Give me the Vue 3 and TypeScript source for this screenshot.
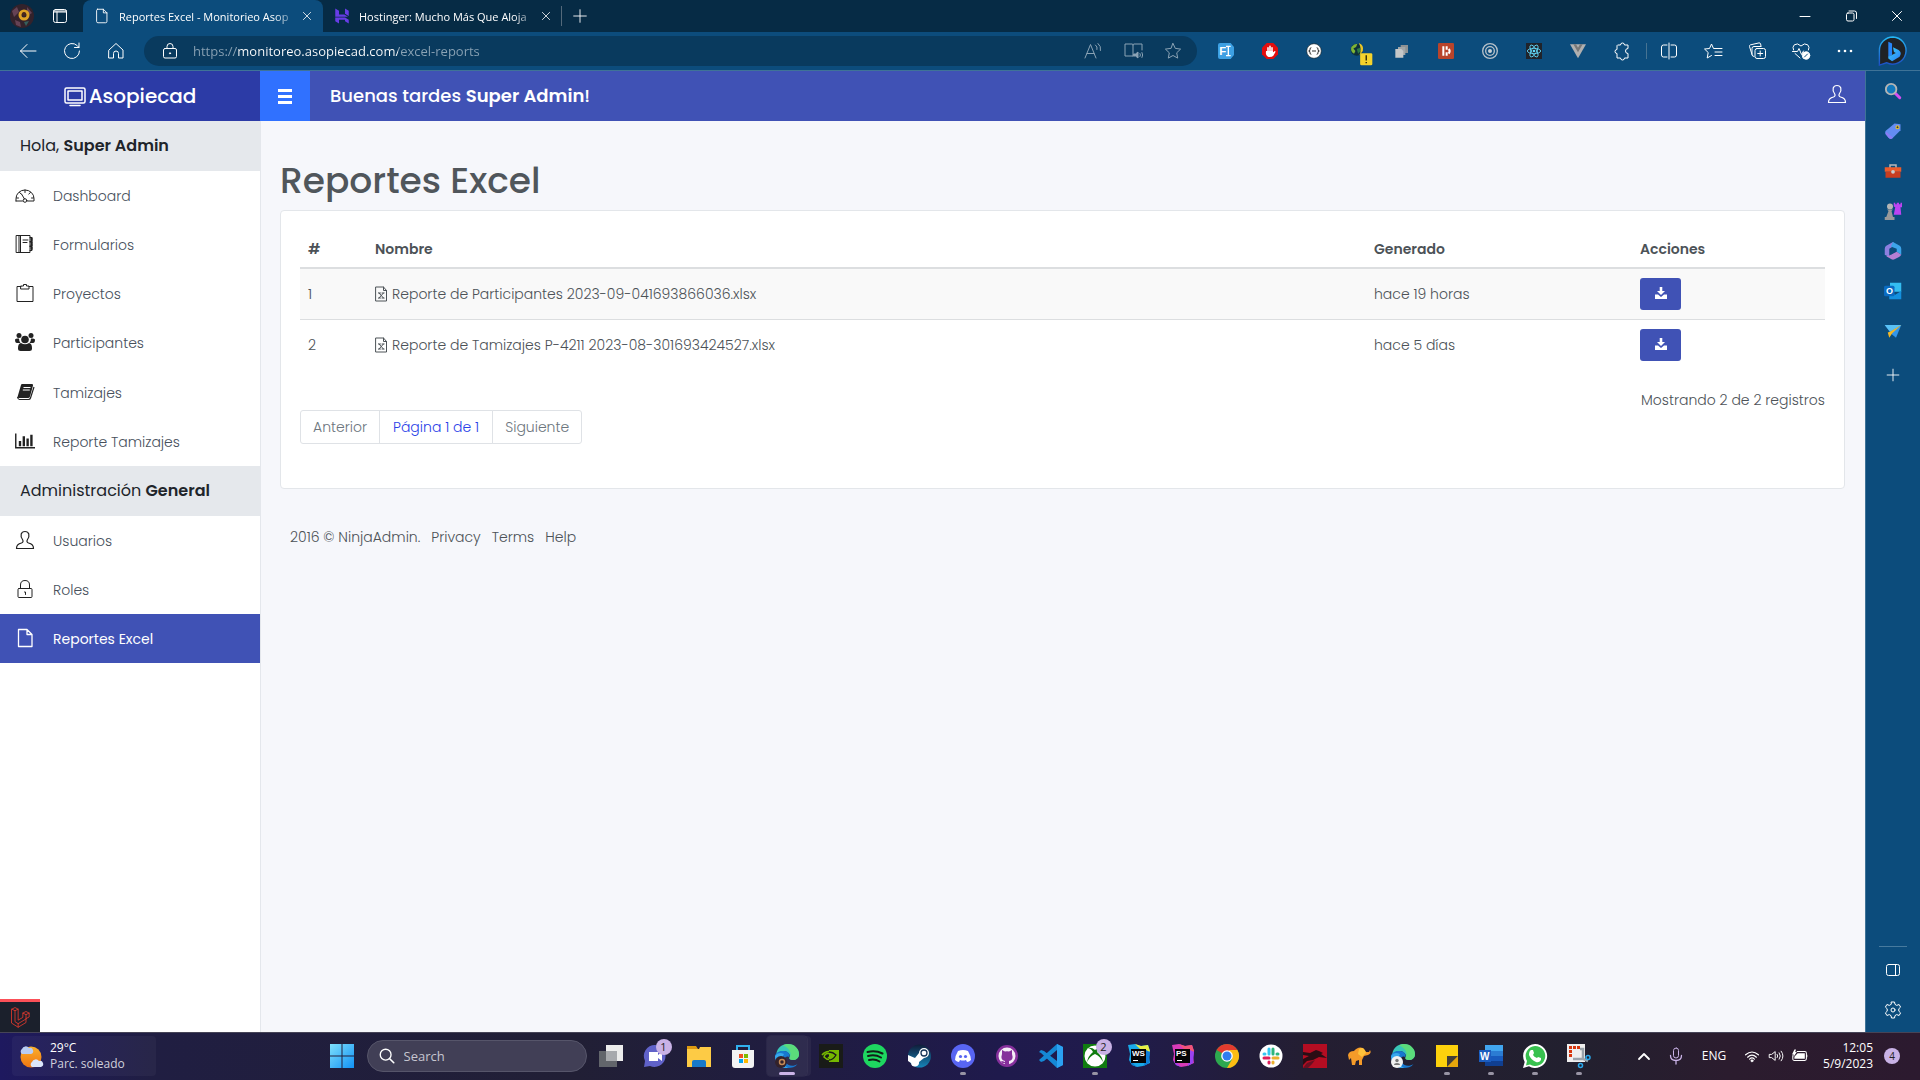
<script setup lang="ts">
import { ref } from 'vue'

interface Icon { box?: string; body: string }
interface NamedIcon { id: string; label: string; icon: Icon }
interface TaskApp extends NamedIcon { state?: 'active' | 'running'; badge?: string }
interface MenuItem { label: string; icon: Icon; active?: boolean }
interface Report { id: number; name: string; created: string }

const line = (body: string, box = '0 0 20 20'): Icon => ({
  box,
  body: `<g fill="none" stroke="currentColor" stroke-linecap="round" stroke-linejoin="round">${body}</g>`,
})
const solid = (body: string, box = '0 0 24 24'): Icon => ({ box, body })

const chrome = {
  workspaces: line('<rect x="3.5" y="3.5" width="13" height="13" rx="2"/><path d="M3.5 5h13M3.5 6h13M7 6v10"/>'),
  page: line('<path d="M5 2.5h6.500l4 4V16a1.500 1.500 0 0 1-1.500 1.500H5.500A1.500 1.500 0 0 1 4 16V4a1.500 1.500 0 0 1 1-1.500zM11.500 2.500v4h4"/>'),
  close: line('<path d="M5.500 5.500l9 9M14.500 5.500l-9 9"/>'),
  plus: line('<path d="M10 3v14M3 10h14"/>'),
  back: line('<path d="M18 10H2.500M9 3.500L2.500 10 9 16.500"/>'),
  refresh: line('<path d="M17.500 10a7.500 7.500 0 1 1-2.300-5.400L17 6.500M17 2v4.500h-4.500"/>'),
  home: line('<path d="M3 9l7-6.500L17 9v8h-4.500v-4.500a2.500 2.500 0 0 0-5 0V17H3z"/>'),
  lock: line('<rect x="3.500" y="7.500" width="13" height="9.500" rx="1.500"/><path d="M7 7.500V5.500a3 3 0 0 1 6 0v2"/><circle cx="10" cy="12.300" r=".6" fill="currentColor"/>'),
  aloud: line('<path d="M2 17L7.500 3.500 13 17M4 12.500h7M12.500 4a4 4 0 0 1 1.500 4.500M15 2.500a7 7 0 0 1 2.500 7"/>'),
  book: line('<path d="M10 15H2V3h7q1 0 1 1V15M10 4q0-1 1-1h8v6"/><path d="M11 13h1.500l2.500-2v6l-2.500-2H11z" fill="currentColor"/><path d="M17 12.500q1 1.500 0 3M19 11.500q1.500 2.500 0 5"/>'),
  star: line('<path d="M10 2.500l2.300 4.900 5.300.7-3.900 3.700 1 5.300-4.700-2.600-4.700 2.600 1-5.300L2.400 8.100l5.300-.7z"/>'),
  puzzle: line('<path d="M6 4h2.500a2 2 0 0 1 4 0H16v3.500a2.500 2.500 0 0 0 0 5V17h-3.500a2 2 0 0 1-4 0H5v-4.500a2 2 0 1 1 0-4V5z"/>'),
  split: line('<path d="M8 4H4.500A2 2 0 0 0 2.500 6v8a2 2 0 0 0 2 2H8M12 4h3.500a2 2 0 0 1 2 2v8a2 2 0 0 1-2 2H12M10 2v16"/>'),
  favorites: line('<path d="M13 7.500h-2.500L8.500 3 6.500 7.500 1.500 8l3.700 3.500-1 5.500 4.300-2.500M13 7.500h6M12 11h7M12 14.500h7"/>'),
  collections: line('<path d="M5 13.500L2.500 5.500q-.3-1.200.8-1.600l8.700-2q1.200-.2 1.600 1L14 5"/><path d="M7 15.500q-2 0-2-2V7.500q0-2 2-2h7"/><rect x="8" y="7.500" width="10.500" height="10" rx="2"/><path d="M13.200 10v5M10.700 12.500h5"/>'),
  health: line('<path d="M2.500 9Q1 6 3.300 3.800 6.500 1.500 10 5q3.500-3.500 6.700-1.200Q19 6 17.500 9M1.500 10.500h5l1.500-3 2.500 6 2-3.500M4 12.500l5 4.500"/><circle cx="15" cy="14.500" r="3.700" fill="currentColor"/><path d="M13.500 16l3-3" stroke="#0c4c7c"/>'),
  dots: solid('<g fill="currentColor"><circle cx="4" cy="10" r="1.300"/><circle cx="10" cy="10" r="1.300"/><circle cx="16" cy="10" r="1.300"/></g>', '0 0 20 20'),
  minimize: line('<path d="M5 10.500h10"/>'),
  restore: line('<rect x="5.500" y="7" width="7.500" height="8" rx="1.500"/><path d="M8 5h5.500a2 2 0 0 1 2 2v5.500"/>'),
  panel: line('<rect x="3.500" y="4.500" width="13" height="11" rx="2"/><path d="M12.500 4.500v11"/>'),
  gear: line('<circle cx="10" cy="10" r="2"/><path d="M8.500 2h3l.5 2.400 1.700 1 2.400-.9 1.500 2.600-1.800 1.700v2.400l1.800 1.700-1.500 2.600-2.400-.9-1.700 1-.5 2.400h-3L8 15.600l-1.700-1-2.400.9-1.500-2.600 1.800-1.700V8.800L2.400 7.100l1.500-2.600 2.400.9 1.700-1z"/>'),
}

const hostinger = solid('<path fill="#673de6" d="M3 2l5 3v5h7l5 3H3zM16 2l5 3v7l-5-3zM3 14h13l5 3v5l-5-3v-2H8v5l-5-3z"/>')
const avatar = solid('<circle cx="12" cy="12" r="12" fill="#33222b"/><path d="M2 7l5-4 2 5-5 5zM17 3l5 6-5 3zM5 16l5 2 1 5-5-2z" fill="#654254"/><path d="M14 18l5-1-3 5z" fill="#35605d"/><circle cx="14" cy="11" r="4" fill="none" stroke="#dfa225" stroke-width="3"/><circle cx="14" cy="10" r="2" fill="#4b271c"/>')

const extensions: NamedIcon[] = [
  { id: 'font', label: 'Fonts', icon: solid('<path fill="#3da0e3" d="M3 0h16l5 6v12l-5 6H3q-3 0-3-3V3q0-3 3-3z"/><text x="2" y="18" font-family="Liberation Sans" font-weight="700" font-size="17" fill="#fff">F</text><path d="M12 5h7M12 19h7M15.500 5v14" stroke="#fff" stroke-width="2"/>') },
  { id: 'block', label: 'Bloqueador', icon: solid('<path fill="#e40d0d" d="M7 0h10l7 7v10l-7 7H7l-7-7V7z"/><path d="M9 13V7M12 13V5M15 13V7M7 13v3" stroke="#fff" stroke-width="2.300" stroke-linecap="round"/><path fill="#fff" d="M6 12h10l1 2 2-2q2 0 1 2l-3 5q-2 2-5 2-5 0-6-5z"/>') },
  { id: 'json', label: 'JSON', icon: solid('<circle cx="12" cy="12" r="11" fill="#fff" stroke="#18242b"/><path d="M8 7q-2 0-2 2v2l-2 1 2 1v2q0 2 2 2M16 7q2 0 2 2v2l2 1-2 1v2q0 2-2 2M9 12h6" fill="none" stroke="#333" stroke-width="1.500"/>') },
  { id: 'idm', label: 'Descargas', icon: solid('<circle cx="10" cy="10" r="9" fill="#0d2f3a"/><path d="M2 6q4-5 9-5l-2 5-4 2 3 4-2 4Q0 13 2 6z" fill="#7db436"/><path d="M10 9l5-2 1 5-4 4z" fill="#2c7a44"/><path d="M13 0q8 3 6 12l-5 6q4-9-1-18z" fill="#e9c527"/><rect x="15" y="15" width="18" height="18" rx="2" fill="#f5d32c"/><path d="M24 18v8M24 28v2" stroke="#25220c" stroke-width="2"/>', '0 0 34 34') },
  { id: 'copy', label: 'Copias', icon: solid('<path d="M10 3h11v12H10z" fill="#8e9294"/><path fill="#a2a6a8" d="M6 6h11v12H6z"/><path fill="#c5c7c8" d="M2 9h9l3 3v10H2z"/>') },
  { id: 'bitbar', label: 'Extensión', icon: solid('<rect width="24" height="24" rx="2" fill="#b9442b"/><path d="M8 5v14M13 5v5M13 14v5M16 9q3 3 0 7" stroke="#fff" stroke-width="3" fill="none"/>') },
  { id: 'target', label: 'Objetivo', icon: solid('<g fill="none" stroke="#b8c2ca" stroke-width="2"><circle cx="12" cy="12" r="11"/><circle cx="12" cy="12" r="6.500"/></g><circle cx="12" cy="12" r="3" fill="#c8d0d6"/>') },
  { id: 'react', label: 'React', icon: solid('<path fill="#20232a" d="M0 0h24v24H0z"/><g fill="none" stroke="#61dafb" stroke-width="1.300"><ellipse cx="12" cy="12" rx="10" ry="4"/><ellipse cx="12" cy="12" rx="10" ry="4" transform="rotate(60 12 12)"/><ellipse cx="12" cy="12" rx="10" ry="4" transform="rotate(120 12 12)"/></g><circle cx="12" cy="12" r="2" fill="#61dafb"/>') },
  { id: 'vue', label: 'Vue', icon: solid('<path fill="#b0b0b0" d="M0 2h24L12 23z"/><path fill="#777" d="M5 2h4l3 5 3-5h4l-7 12z"/>') },
  { id: 'puzzle', label: 'Extensiones', icon: chrome.puzzle },
]
const toolbarActions: NamedIcon[] = [
  { id: 'split', label: 'Pantalla dividida', icon: chrome.split },
  { id: 'favorites', label: 'Favoritos', icon: chrome.favorites },
  { id: 'collections', label: 'Colecciones', icon: chrome.collections },
  { id: 'health', label: 'Rendimiento', icon: chrome.health },
  { id: 'more', label: 'Más', icon: chrome.dots },
]
const navActions: NamedIcon[] = [
  { id: 'back', label: 'Atrás', icon: chrome.back },
  { id: 'refresh', label: 'Actualizar', icon: chrome.refresh },
  { id: 'home', label: 'Inicio', icon: chrome.home },
]
const bing = solid('<defs><linearGradient id="bg1" x2="0" y2="1"><stop stop-color="#25b8f5"/><stop offset="1" stop-color="#1d4fc4"/></linearGradient><linearGradient id="bg2" x2="1" y2="1"><stop stop-color="#39d2f0"/><stop offset="1" stop-color="#2b7cff"/></linearGradient></defs><path d="M16 1a14.500 14.500 0 1 1-7 27.500L1.500 31V16A14.500 14.500 0 0 1 16 1z" fill="#1f2226" stroke="url(#bg1)" stroke-width="1.500"/><path d="M11 6l4 2v12l-4 3z" fill="#2785f8"/><path d="M16 12l6 3q4 3 1 7l-8 5-4-3v-2l8-4-2-1z" fill="url(#bg2)"/>', '0 0 32 32')

const edgeApps: NamedIcon[] = [
  { id: 'search', label: 'Buscar', icon: solid('<path d="M15 15l6 6" stroke="#d44df2" stroke-width="4" stroke-linecap="round"/><circle cx="9.500" cy="9.500" r="7" fill="#1379bd" stroke="#b5b5b5" stroke-width="2.500"/>') },
  { id: 'shop', label: 'Compras', icon: solid('<path d="M14 2l8 1v8L11 22q-2 1-4 0l-5-6q-1-2 0-4z" fill="#648cf2"/><path d="M3 13l9 8q-3 3-6 0l-4-5z" fill="#8a7cf5"/><circle cx="18" cy="7" r="2" fill="#333" stroke="#e9c32a" stroke-width="1.500"/>') },
  { id: 'tools', label: 'Herramientas', icon: solid('<path d="M8 8V4h8v4" fill="none" stroke="#b8b8b8" stroke-width="2"/><path d="M1 7h22v6H1z" fill="#ee5b2b"/><path d="M2 13h20v8H2z" fill="#c93d20"/><circle cx="12" cy="13" r="2.500" fill="#ccc"/>') },
  { id: 'games', label: 'Juegos', icon: solid('<path d="M13 1h2v2h2V1h3v2h2V1h2v6h-2l1 10H13l2-10-2-1z" fill="#bc43f2"/><circle cx="8" cy="6" r="4" fill="#b5b5b5"/><path d="M4 10h8l-2 2 2 8h2v4H1v-4h2l3-8z" fill="#999"/>') },
  { id: 'm365', label: 'Microsoft 365', icon: solid('<path d="M12 0L3 5q-2 1-2 4v8l6 3V9l8-5z" fill="#8c7fe0"/><path d="M12 0l9 5q2 1 2 4v8l-6-4V9L9 6z" fill="#3ca4ea"/><path d="M7 18l10-5 6 4q-1 2-3 3l-6 3q-2 1-4 0l-7-4z" fill="#b57fd4"/><path d="M9 9l7 3-7 5z" fill="#0c4c7c"/>') },
  { id: 'outlook', label: 'Outlook', icon: solid('<path d="M8 1h15v12H8z" fill="#34bdf1"/><path d="M7 13l8 4 8-5v11H7z" fill="#1490df"/><rect y="5" width="14" height="14" rx="2" fill="#0a6bc2"/><text x="2.500" y="16.500" font-family="Liberation Sans" font-weight="700" font-size="12" fill="#fff">O</text>') },
  { id: 'drop', label: 'Drop', icon: solid('<path d="M1 4l22 0-7 17-6-5z" fill="#3396eb"/><path d="M1 4h22L8 13z" fill="#59c1f5"/><path d="M8 13L23 4 11 15l-4 6-2-7z" fill="#f4b826"/>') },
  { id: 'add', label: 'Agregar', icon: line('<path d="M10 3.500v13M3.500 10h13"/>') },
]

const menuIcons = {
  dashboard: line('<path d="M1 16v-2.500a9 8.500 0 0 1 18 0V16h-6.500M7.500 16H1M10 5v2.500M4.500 7.500l1.700 1.500M15.500 7.500l-1.700 1.500M1.500 13h2M16.500 13h2M6.500 9l3 5"/><circle cx="10" cy="15.500" r="1.800"/>'),
  forms: line('<path d="M1.500 1.500H15v17H1.500zM4 1.500v17M5.500 1.500v17M8 6h5M8 8.500h4M15 3.500h2v4h-2M15 8h2v4h-2M15 12.500h2v4h-2"/><path d="M16.500 4v12" stroke-width="2" stroke-dasharray="2 1"/>'),
  clipboard: line('<path d="M6 3.500H2v15h16v-15h-4M6 6h8V3h-2.500V1.500h-3V3H6z"/>'),
  people: solid('<g fill="currentColor"><circle cx="4" cy="3.500" r="2.500"/><circle cx="16" cy="3.500" r="2.500"/><path d="M0 7.500q1-1.500 4-1 0 3 1.500 4.500H2Q0 11 0 7.500zM20 7.500q-1-1.500-4-1 0 3-1.500 4.500H18q2 0 2-3.500z"/><circle cx="10" cy="7.500" r="3.800"/><path d="M6 11q4 2.500 8 0 3 .5 3 5v1q0 2-2.500 2h-9Q3 19 3 17v-1q0-4.500 3-5z"/></g>', '0 0 20 20'),
  book: solid('<path d="M7 2h10q1.500 0 1 1.500L15 14.500q-.4 1.500-2 1.500H4q-1.500 0-1.500-1L6 3q.3-1 1-1z" fill="currentColor"/><path d="M8.500 5.500h7M7.800 8h7" stroke="#fff"/><path d="M2.500 15q.5 2.500 2 2.500h9q1.500 0 2-1.500l3.500-11" stroke="currentColor" fill="none" stroke-width="1.200"/>', '0 0 20 20'),
  chart: solid('<path d="M.8 2v15H21" fill="none" stroke="currentColor" stroke-width="1.500"/><path d="M4 10h2.500v5.500H4zM8 5h2.500v10.500H8zM12 7.500h2.500v8H12zM16 3.500h2.500v12H16z" fill="currentColor"/>', '0 0 21 20'),
  user: line('<path d="M7.500 9.500Q5.500 7 6.200 4 7 1.500 10 1.500T13.800 4q.7 3-1.300 5.500-1.500 2.500 1 3.500 5 1 5 5.500H1.500q0-4.500 5-5.500 2.500-1 1-3.500z" stroke-width="1.200"/>'),
  lock: line('<rect x="3" y="9.500" width="14" height="9" rx="1"/><path d="M5.500 9.500V6q0-4.500 4.500-4.500T14.500 6v3.500M9.500 13h1v2.500"/>'),
  file: line('<path d="M3.500 1.500h8.500l5 5v12h-13.500zM12 1.500v5h5" stroke-width="1.300"/>'),
  monitor: line('<rect x="1" y="2" width="20" height="15" rx="1.500" stroke-width="1.500"/><rect x="4" y="5" width="14" height="9" stroke-width="1.500"/><path d="M6 19.500h10" stroke-width="1.500"/>', '0 0 22 21'),
  burger: solid('<path d="M1 2.500h14M1 8.500h14M1 14.500h14" stroke="currentColor" stroke-width="3"/>', '0 0 16 16'),
  excel: line('<path d="M1 1h7.500l3 3.500V15H1zM8.500 1v3.500h3M3.500 7h2M7 7h2M4 7l4.500 5M8.500 7L4 12M3.500 12h2M7 12h2"/>', '0 0 13 16'),
  download: solid('<path d="M4.700 0h2.600v4H10L6 8 2 4h2.700z" fill="currentColor"/><path d="M0 7.500h3L6 10l3-2.500h3V12H0z" fill="currentColor"/>', '0 0 12 12'),
}

const mainMenu: MenuItem[] = [
  { label: 'Dashboard', icon: menuIcons.dashboard },
  { label: 'Formularios', icon: menuIcons.forms },
  { label: 'Proyectos', icon: menuIcons.clipboard },
  { label: 'Participantes', icon: menuIcons.people },
  { label: 'Tamizajes', icon: menuIcons.book },
  { label: 'Reporte Tamizajes', icon: menuIcons.chart },
]
const adminMenu: MenuItem[] = [
  { label: 'Usuarios', icon: menuIcons.user },
  { label: 'Roles', icon: menuIcons.lock },
  { label: 'Reportes Excel', icon: menuIcons.file, active: true },
]
const reports: Report[] = [
  { id: 1, name: 'Reporte de Participantes 2023-09-041693866036.xlsx', created: 'hace 19 horas' },
  { id: 2, name: 'Reporte de Tamizajes P-4211 2023-08-301693424527.xlsx', created: 'hace 5 días' },
]

const laravel = line('<path d="M2 4l4-2 4 2v14l6-3.500V9l4-2 4 2v5l-4 2v5l-10 6-8-5zM2 4l4 2 4-2M6 6v14l4 2.500 10-6M10 22.500V27M16 9l4 2 4-2M20 11v5" stroke="#ef3b2d"/>', '0 0 26 28')
const weatherIcon = solid('<defs><linearGradient id="sun" x2="0" y2="1"><stop stop-color="#fbb02b"/><stop offset="1" stop-color="#ef7512"/></linearGradient></defs><circle cx="12" cy="13" r="10.500" fill="url(#sun)"/><path d="M3 10a3 3 0 0 1 0-5 4 4 0 0 1 7-1 3 3 0 0 1 2 6z" fill="#b9cdf3"/><path d="M13 23a3 3 0 0 1 0-5 4 4 0 0 1 7-1 3 3 0 0 1 2 6z" fill="#dbe6fb"/>')
const startIcon = solid('<defs><linearGradient id="win" x2="1" y2="1"><stop stop-color="#7fe0fb"/><stop offset="1" stop-color="#1191f5"/></linearGradient></defs><path fill="url(#win)" d="M0 0h11.500v11.500H0zM12.500 0H24v11.500H12.500zM0 12.500h11.500V24H0zM12.500 12.500H24V24H12.500z"/>')
const searchIcon = line('<circle cx="8.500" cy="8.500" r="6" stroke-width="1.500"/><path d="M13 13l4.500 4.500" stroke-width="1.800"/>')

const edgeBody = '<path d="M1 13C1 5 6 0 12.500 0 19 0 24 5 24 10c0 4-3 6-6 6-3 0-4-1-3.500-2.500C16 11 13 7 9 7c-4 0-7 2-8 6z" fill="#39c6b8"/><path d="M13 0c7 0 11 5 11 10 0 4-3 6-6 6-3 0-4-1-3.500-2.500C17 10 15 4 8 1.500 9.500.5 11 0 13 0z" fill="#5bdc7b"/><path d="M0 12C1 8 5 6.500 9 7c4 0 6 3 5.500 6-4-2-6 2-4 5 2 4 8 5 12 2-2 3-6 4-10 4C5 24 0 18.500 0 12z" fill="#1878cf"/><path d="M9 10c-3 4-1 11 4 13.900C5 25 0 19 0 12q3-5 9-2z" fill="#37a8ec"/>'
const jet = (a: string, b: string, c: string, t: string) =>
  `<path d="M1 1l7-1 6 2 7-1 2 6-1 6 1 6-7 3-6 1-5-2-3-5 1-6z" fill="${a}"/><path d="M8 0l6 2 7-1 2 6-4 4z" fill="${b}"/><path d="M2 16l8 7-5-2zM19 6l4 2-1 11-5 3z" fill="${c}"/><path d="M4 5h15v14H4z" fill="#050505"/><text x="5" y="12" font-family="Liberation Sans" font-weight="700" font-size="8" fill="#fff">${t}</text><path d="M6 16.500h5" stroke="#fff"/>`

const taskApps: TaskApp[] = [
  { id: 'tasks', label: 'Vista de tareas', icon: solid('<path d="M7 1h17v16H7z" fill="#ececec"/><path d="M0 7h18v16H0z" fill="#62656b"/><path d="M7 7h11v10H7z" fill="#a7a9ad"/>') },
  { id: 'chat', label: 'Chat', badge: '1', icon: solid('<path d="M12 1a11 11 0 1 1-5 21l-6 1 1-6A11 11 0 0 1 12 1z" fill="#6062c9"/><path d="M6 8h9v9H6zM15 11l4-3v9l-4-3z" fill="#fff"/>') },
  { id: 'files', label: 'Explorador', icon: solid('<path d="M0 2h9l2 3h-11z" fill="#dd9911"/><path d="M0 5h12l1-2h11v20H0z" fill="#fdcb45"/><path d="M5 18q0-2 2-2h10q2 0 2 2v5H5z" fill="#1779c9"/>') },
  { id: 'store', label: 'Tienda', icon: solid('<path d="M6 6V2h12v4" fill="none" stroke="#31b0ee" stroke-width="2"/><path d="M1 6h22v15q0 3-3 3H4q-3 0-3-3z" fill="#f3f3f3"/><path d="M8 10h4v4H8z" fill="#f25022"/><path d="M13 10h4v4h-4z" fill="#7fba00"/><path d="M8 15h4v4H8z" fill="#00a4ef"/><path d="M13 15h4v4h-4z" fill="#ffb900"/>') },
  { id: 'edge', label: 'Edge', state: 'active', icon: solid(edgeBody + '<circle cx="6" cy="18" r="6" fill="#33222b"/><circle cx="7" cy="18" r="2.500" fill="none" stroke="#c48a55" stroke-width="1.500"/>') },
  { id: 'nvidia', label: 'NVIDIA', icon: solid('<path d="M0 0h24v24H0z" fill="#191b18"/><path d="M10 6h10v12H10z" fill="#76b900"/><path d="M3 11q6-7 14 0-6 8-12 2 1-5 7-3l1 2q-2 3-4 1" fill="none" stroke="#76b900" stroke-width="1.500"/><path d="M10 8q4 0 7 3-3 5-7 5" fill="none" stroke="#191b18" stroke-width="1.300"/>') },
  { id: 'spotify', label: 'Spotify', icon: solid('<circle cx="12" cy="12" r="12" fill="#1ed760"/><path d="M4.500 8q8-2 15 1.500M5 12q7-2 13 1.500M6 16q6-1.500 10.500 1.500" fill="none" stroke="#121f18" stroke-width="2" stroke-linecap="round"/>') },
  { id: 'steam', label: 'Steam', icon: solid('<defs><linearGradient id="stm" x2="0" y2="1"><stop stop-color="#101c38"/><stop offset="1" stop-color="#1684b8"/></linearGradient></defs><circle cx="12.500" cy="12" r="11.500" fill="url(#stm)"/><path d="M1 11l7 3 4-5a5 5 0 1 1 5 5l-5 4a4 4 0 0 1-8 1l-3-2z" fill="#fff"/><circle cx="17" cy="9" r="3" fill="#fff" stroke="#173457" stroke-width="1.300"/>') },
  { id: 'discord', label: 'Discord', state: 'running', icon: solid('<circle cx="12" cy="12" r="12" fill="#5865f2"/><path d="M7 7q5-2 10 0 3 5 3 9-2 2-4 2l-1-2q-3 1-6 0l-1 2q-2 0-4-2 0-4 3-9z" fill="#fff"/><circle cx="9.500" cy="12.500" r="1.600" fill="#5865f2"/><circle cx="14.500" cy="12.500" r="1.600" fill="#5865f2"/>') },
  { id: 'github', label: 'GitHub', icon: solid('<circle cx="12" cy="12" r="11" fill="#86309c"/><circle cx="12" cy="12" r="8.500" fill="#f5eef7"/><path d="M7 6l3 1.500q2-.5 4 0L17 6v4q2 6-3 7v4h-4v-2q-3 1-4-2 2 0 4 1v-1q-5-1-3-7z" fill="#86309c"/>') },
  { id: 'code', label: 'VS Code', icon: solid('<path d="M18 0l6 3v18l-6 3L2 9l-2-1 2-2 3 1 13 10V6L5 17l-3 1-2-2z" fill="#1588d5"/><path d="M18 0l6 3v18l-6 3z" fill="#2ba1f1"/>') },
  { id: 'xbox', label: 'Xbox', state: 'running', badge: '2', icon: solid('<path d="M0 0h24v24H0z" fill="#107c10"/><circle cx="12" cy="12" r="10.500" fill="#fff"/><path d="M4 4q5-1 8 2 3-3 8-2-4 0-6 4 5 4 6 10-3-6-8-8-5 2-8 8 1-6 6-10-2-4-6-4z" fill="#107c10"/>') },
  { id: 'ws', label: 'WebStorm', icon: solid(jet('#19a8e8', '#e8ed45', '#0d7ed8', 'WS')) },
  { id: 'ps', label: 'PhpStorm', icon: solid(jet('#d83bb8', '#f05577', '#9a42f1', 'PS')) },
  { id: 'chrome', label: 'Chrome', icon: solid('<circle cx="12" cy="12" r="12" fill="#2da94f"/><path d="M12 12L1.600 6a12 12 0 0 1 20.800 0z" fill="#e33b2e"/><path d="M12 24l5.200-9L14 6h8.400A12 12 0 0 1 12 24z" fill="#fdbd13"/><circle cx="12" cy="12" r="5.800" fill="#fff"/><circle cx="12" cy="12" r="4.500" fill="#2f7df0"/>') },
  { id: 'slack', label: 'Slack', icon: solid('<circle cx="12" cy="12" r="11.500" fill="#fff"/><g stroke-width="3" stroke-linecap="round"><path d="M10 5v5M5 10h1" stroke="#36c5f0"/><path d="M14 5v5M18 10h1" stroke="#2eb67d"/><path d="M14 14h5M14 18v1" stroke="#ecb22e"/><path d="M5 14h5M10 18v1" stroke="#e01e5a"/></g>') },
  { id: 'dragon', label: 'Kali', icon: solid('<path d="M0 0h24v24H0z" fill="#b40d22"/><path d="M0 8l7 1 6-3 3 1 4 2-2 1 6 4-8-1-6 3-6 1-4 4V15l6-3-6-1z" fill="#2a0d14"/><path d="M0 24l4-5 8-3-3 4-4 4z" fill="#681022"/>') },
  { id: 'elephant', label: 'Base de datos', icon: solid('<path d="M1 11q1-4 6-4 4-5 9-3l3 4 3 0 1-2q2 3-2 5l-4 1-2 4v5h-3v-5l-3 1-1 4H5l-1-7-2 2z" fill="#f59b29"/><path d="M12 5q5-3 7 4l-4 4-4-3z" fill="#ffc23b"/>') },
  { id: 'edge-profile', label: 'Edge perfil', icon: solid(edgeBody + '<circle cx="6" cy="18" r="6" fill="#f1f1f1"/><circle cx="6" cy="16.500" r="1.700" fill="#777"/><path d="M3 21q0-2 3-2t3 2z" fill="#777"/>') },
  { id: 'notes', label: 'Notas', state: 'running', icon: solid('<path d="M1 1h22v11L12 23H1z" fill="#fdd10c"/><path d="M12 12h11L12 23z" fill="#423d37"/><path d="M23 12v11H12z" fill="#e5a50b"/>') },
  { id: 'word', label: 'Word', state: 'running', icon: solid('<path d="M6 1h18v6H6z" fill="#41a5ee"/><path d="M6 7h18v5H6z" fill="#2b7cd3"/><path d="M6 12h18v5H6z" fill="#185abd"/><path d="M6 17h18v5H6z" fill="#103f91"/><path d="M0 6h12v12H0z" fill="#1b5cbe"/><text x="1" y="15.500" font-family="Liberation Sans" font-weight="700" font-size="10" fill="#fff">W</text>') },
  { id: 'whatsapp', label: 'WhatsApp', state: 'running', icon: solid('<path d="M12 0a12 12 0 1 1-6 22.300L0 24l1.700-6A12 12 0 0 1 12 0z" fill="#fff"/><path d="M12 2a10 10 0 1 1-5 18.500L3 21.500 4 17A10 10 0 0 1 12 2z" fill="#38c14f"/><path d="M8 6l2 0 1 3-1 2q1 2 4 3l1-1 3 1v2q-2 3-5 2-5-2-7-7 0-4 2-5z" fill="#fff"/>') },
  { id: 'snip', label: 'Recortes', state: 'running', icon: solid('<path d="M0 0h18v18H0z" fill="#efefef"/><path d="M3.500 13V3.500H14" fill="none" stroke="#d8360e" stroke-width="3" stroke-dasharray="3 1"/><path d="M13 5h3v10l5 2M6 15h10" fill="none" stroke="#9aa3ab" stroke-width="2.500"/><circle cx="21" cy="13.500" r="2" fill="none" stroke="#2aa8ec" stroke-width="1.500"/><circle cx="13.500" cy="21.500" r="2" fill="none" stroke="#2aa8ec" stroke-width="1.500"/>') },
]

const tray = {
  caret: line('<path d="M5 13l5-5 5 5" stroke-width="1.800"/>'),
  mic: line('<rect x="7.500" y="2" width="5" height="10" rx="2.500"/><path d="M4.500 9.500q0 5 5.500 5t5.500-5M10 14.500V18" stroke-width="1.300"/>'),
  wifi: line('<path d="M2 8.500q8-7 16 0M4.500 11.500q5.500-5 11 0M7 14q3-3 6 0" stroke-width="1.500"/><circle cx="10" cy="16" r="1.300" fill="currentColor"/>'),
  volume: line('<path d="M2 8h2.500L9 4.500v11L4.500 12H2zM11.500 8q1.500 2 0 4M14 6q3 4 0 8M16.500 4q4.500 6 0 12" stroke-width="1.200"/>'),
  battery: solid('<path d="M6 4.500h10q2 0 2 2v7q0 2-2 2H3q-2 0-2-2V9M18.500 8.500v3" fill="none" stroke="currentColor" stroke-width="1.300"/><path d="M7 6.500h9v7H3V11z" fill="currentColor"/><path d="M3 2L0 8h2v3l4-6H4l1-3z" fill="currentColor"/>', '0 0 20 20'),
}

const address = ref('https://monitoreo.asopiecad.com/excel-reports')
const query = ref('')
</script>

<template>
  <div class="desktop">
    <header class="browser">
      <div class="titlebar">
        <button class="profile" aria-label="Perfil"><svg :viewBox="avatar.box" v-html="avatar.body" /></button>
        <button class="spaces" aria-label="Pestañas"><svg :viewBox="chrome.workspaces.box" v-html="chrome.workspaces.body" /></button>
        <div class="tab current">
          <svg :viewBox="chrome.page.box" v-html="chrome.page.body" />
          <span class="tab-title">Reportes Excel - Monitorieo Asop</span>
          <button aria-label="Cerrar pestaña"><svg :viewBox="chrome.close.box" v-html="chrome.close.body" /></button>
        </div>
        <div class="tab">
          <svg :viewBox="hostinger.box" v-html="hostinger.body" />
          <span class="tab-title">Hostinger: Mucho Más Que Aloja</span>
          <button aria-label="Cerrar pestaña"><svg :viewBox="chrome.close.box" v-html="chrome.close.body" /></button>
        </div>
        <button class="new-tab" aria-label="Nueva pestaña"><svg :viewBox="chrome.plus.box" v-html="chrome.plus.body" /></button>
        <div class="window-buttons">
          <button aria-label="Minimizar"><svg :viewBox="chrome.minimize.box" v-html="chrome.minimize.body" /></button>
          <button aria-label="Restaurar"><svg :viewBox="chrome.restore.box" v-html="chrome.restore.body" /></button>
          <button aria-label="Cerrar"><svg :viewBox="chrome.close.box" v-html="chrome.close.body" /></button>
        </div>
      </div>
      <div class="toolbar">
        <button v-for="a in navActions" :key="a.id" class="tool" :aria-label="a.label"><svg :viewBox="a.icon.box" v-html="a.icon.body" /></button>
        <div class="address">
          <svg class="padlock" :viewBox="chrome.lock.box" v-html="chrome.lock.body" />
          <input v-model="address" type="text" aria-label="Dirección" />
          <button aria-label="Leer en voz alta"><svg :viewBox="chrome.aloud.box" v-html="chrome.aloud.body" /></button>
          <button aria-label="Lector"><svg :viewBox="chrome.book.box" v-html="chrome.book.body" /></button>
          <button aria-label="Agregar a favoritos"><svg :viewBox="chrome.star.box" v-html="chrome.star.body" /></button>
        </div>
        <div class="extensions">
          <button v-for="e in extensions" :key="e.id" class="tool ext" :class="e.id" :aria-label="e.label"><svg :viewBox="e.icon.box" v-html="e.icon.body" /></button>
        </div>
        <div class="actions">
          <button v-for="a in toolbarActions" :key="a.id" class="tool" :aria-label="a.label"><svg :viewBox="a.icon.box" v-html="a.icon.body" /></button>
        </div>
        <button class="bing" aria-label="Bing"><svg :viewBox="bing.box" v-html="bing.body" /></button>
      </div>
    </header>

    <div class="body">
      <div class="site">
        <header class="site-header">
          <a class="brand" href="#"><svg :viewBox="menuIcons.monitor.box" v-html="menuIcons.monitor.body" />Asopiecad</a>
          <button class="burger" aria-label="Menú"><svg :viewBox="menuIcons.burger.box" v-html="menuIcons.burger.body" /></button>
          <p class="greeting">Buenas tardes <b>Super Admin</b>!</p>
          <button class="account" aria-label="Cuenta"><svg :viewBox="menuIcons.user.box" v-html="menuIcons.user.body" /></button>
        </header>
        <div class="site-body">
          <nav class="sidebar">
            <h2 class="section">Hola, <b>Super Admin</b></h2>
            <ul class="menu main-menu">
              <li v-for="m in mainMenu" :key="m.label"><a href="#"><svg :viewBox="m.icon.box" v-html="m.icon.body" /><span>{{ m.label }}</span></a></li>
            </ul>
            <h2 class="section">Administración <b>General</b></h2>
            <ul class="menu">
              <li v-for="m in adminMenu" :key="m.label"><a href="#" :class="{ selected: m.active }"><svg :viewBox="m.icon.box" v-html="m.icon.body" /><span>{{ m.label }}</span></a></li>
            </ul>
            <button class="debugbar" aria-label="Laravel"><svg :viewBox="laravel.box" v-html="laravel.body" /></button>
          </nav>
          <main class="content">
            <h1>Reportes Excel</h1>
            <section class="card">
              <table>
                <colgroup><col class="c-id" /><col /><col class="c-date" /><col class="c-actions" /></colgroup>
                <thead>
                  <tr><th>#</th><th>Nombre</th><th>Generado</th><th>Acciones</th></tr>
                </thead>
                <tbody>
                  <tr v-for="r in reports" :key="r.id">
                    <td>{{ r.id }}</td>
                    <td><span class="file"><svg :viewBox="menuIcons.excel.box" v-html="menuIcons.excel.body" />{{ r.name }}</span></td>
                    <td>{{ r.created }}</td>
                    <td><button class="download" :aria-label="`Descargar ${r.name}`"><svg :viewBox="menuIcons.download.box" v-html="menuIcons.download.body" /></button></td>
                  </tr>
                </tbody>
              </table>
              <div class="table-footer">
                <div class="pager">
                  <button>Anterior</button><button class="page">Página 1 de 1</button><button>Siguiente</button>
                </div>
                <p>Mostrando 2 de 2 registros</p>
              </div>
            </section>
            <footer class="site-footer">
              <span>2016 © NinjaAdmin.</span><a href="#">Privacy</a><a href="#">Terms</a><a href="#">Help</a>
            </footer>
          </main>
        </div>
      </div>
      <aside class="edge-bar">
        <button v-for="a in edgeApps" :key="a.id" :class="a.id" :aria-label="a.label"><svg :viewBox="a.icon.box" v-html="a.icon.body" /></button>
        <div class="edge-bottom">
          <button aria-label="Panel"><svg :viewBox="chrome.panel.box" v-html="chrome.panel.body" /></button>
          <button aria-label="Configuración"><svg :viewBox="chrome.gear.box" v-html="chrome.gear.body" /></button>
        </div>
      </aside>
    </div>

    <footer class="taskbar">
      <button class="weather">
        <svg :viewBox="weatherIcon.box" v-html="weatherIcon.body" />
        <span class="weather-text"><span class="degrees">29°C</span><span>Parc. soleado</span></span>
      </button>
      <div class="dock">
        <button class="app" aria-label="Inicio"><svg :viewBox="startIcon.box" v-html="startIcon.body" /></button>
        <label class="search-box">
          <svg :viewBox="searchIcon.box" v-html="searchIcon.body" />
          <input v-model="query" type="text" placeholder="Search" aria-label="Search" />
        </label>
        <button v-for="a in taskApps" :key="a.id" class="app" :class="a.state" :aria-label="a.label">
          <svg :viewBox="a.icon.box" v-html="a.icon.body" />
          <span v-if="a.badge" class="badge">{{ a.badge }}</span>
        </button>
      </div>
      <div class="tray">
        <button class="overflow" aria-label="Iconos ocultos"><svg :viewBox="tray.caret.box" v-html="tray.caret.body" /></button>
        <button class="mic" aria-label="Micrófono"><svg :viewBox="tray.mic.box" v-html="tray.mic.body" /></button>
        <button class="lang">ENG</button>
        <button class="status" aria-label="Red, volumen y batería">
          <svg :viewBox="tray.wifi.box" v-html="tray.wifi.body" />
          <svg :viewBox="tray.volume.box" v-html="tray.volume.body" />
          <svg :viewBox="tray.battery.box" v-html="tray.battery.body" />
        </button>
        <button class="clock"><span>12:05</span><span>5/9/2023</span></button>
        <span class="count">4</span>
      </div>
    </footer>
  </div>
</template>

<style>
body { margin: 0; }
</style>

<style scoped>
.desktop {
  display: flex;
  flex-direction: column;
  min-height: 100vh;
  font-family: "Segoe UI", "Open Sans", sans-serif;
  font-size: 12px;
  color: #fff;
}
* { box-sizing: border-box; }
svg { display: block; flex: none; width: 20px; height: 20px; overflow: visible; }
button { padding: 0; border: 0; background: none; color: inherit; font: inherit; }
input { min-width: 0; border: 0; outline: 0; background: none; color: inherit; font: inherit; }
a { color: inherit; text-decoration: none; }
p, h1, h2, ul { margin: 0; padding: 0; }

.titlebar { display: flex; align-items: stretch; height: 32px; background: #062b45; }
.profile { padding-left: 10px; }
.profile svg { width: 24px; height: 24px; }
.spaces { width: 49px; padding-left: 16px; }
.tab { display: flex; align-items: center; width: 238px; padding: 0 7px 0 10px; }
.tab.current { width: 240px; padding-right: 8px; border-radius: 8px 8px 0 0; background: #0c4c7c; }
.tab > svg { width: 18px; height: 18px; }
.tab-title {
  flex: 1;
  margin-left: 8px;
  overflow: hidden;
  font-size: 11px;
  white-space: nowrap;
  mask-image: linear-gradient(90deg, #000 155px, transparent 180px);
}
.tab button svg { width: 16px; height: 16px; }
.new-tab { display: flex; align-items: center; padding-right: 10px; }
.new-tab::before { content: ""; width: 1px; height: 20px; margin-right: 9px; background: #54697a; }
.new-tab svg { width: 18px; height: 18px; }
.window-buttons { display: flex; margin-left: auto; }
.window-buttons button { display: flex; align-items: center; justify-content: center; width: 46px; }

.toolbar { display: flex; align-items: center; height: 39px; padding-left: 6px; border-bottom: 1px solid #3f7397; background: #0c4c7c; }
.tool { display: flex; align-items: center; justify-content: center; width: 44px; height: 30px; }
.address { display: flex; flex: 1; align-items: center; height: 30px; margin: 0 7px 0 6px; padding: 0 4px 0 16px; border-radius: 15px; background: #093a5e; color: #8ba3b5; }
.address input {
  flex: 1;
  margin-left: 13px;
  padding: 0;
  background: linear-gradient(90deg, #8ba3b5 45px, #fff 45px, #fff 205px, #8ba3b5 205px);
  background-clip: text;
  color: transparent;
  font-size: 13px;
}
.padlock { color: #fff; }
.address button { display: flex; justify-content: center; width: 40px; }
.extensions { display: flex; }
.ext svg { width: 16px; height: 16px; }
.ext.idm svg { width: 23px; height: 23px; margin: 6px 0 0 7px; }
.ext.puzzle svg { width: 20px; height: 20px; }
.actions { display: flex; align-items: center; margin-left: 2px; }
.actions::before { content: ""; width: 1px; height: 16px; background: #477392; }
.bing { width: 53px; padding-left: 11px; }
.bing svg { width: 30px; height: 30px; }

.body { display: flex; flex: 1; }
.site { display: flex; flex: 1; flex-direction: column; background: #f6f7fb; color: #4c5257; font-family: Poppins, Inter, sans-serif; font-size: 14px; font-weight: 300; }
.site-header { display: flex; height: 50px; background: #4052b5; color: #fff; }
.brand { display: flex; align-items: center; justify-content: center; gap: 3px; width: 260px; background: #2c3ba6; font-size: 20px; font-weight: 500; }
.brand svg { width: 22px; height: 21px; }
.burger { display: flex; align-items: center; justify-content: center; width: 50px; background: #3071ff; }
.burger svg { width: 16px; height: 16px; }
.greeting { flex: 1; padding-left: 20px; font-size: 18px; font-weight: 500; line-height: 50px; }
.greeting b { font-weight: 600; }
.account { padding: 0 18px 4px 0; }

.site-body { display: flex; flex: 1; }
.sidebar { position: relative; width: 261px; border-right: 1px solid #e4e7ec; background: #fff; color: #20242a; }
.section { height: 50px; padding-left: 20px; background: #e5e8ec; font-size: 16px; font-weight: 400; line-height: 50px; }
.section b { font-weight: 600; }
.menu { list-style: none; }
.menu a { display: flex; align-items: center; gap: 18px; height: 49px; padding-left: 15px; color: #47505c; }
.main-menu li:nth-child(4) { padding-bottom: 1px; }
.menu span { padding-top: 2px; }
.menu svg { margin-bottom: 2px; color: #222; }
.menu a.selected { background: #4052b5; color: #fff; font-weight: 400; }
.menu a.selected svg { color: #fff; }
.debugbar { position: absolute; bottom: 0; left: 0; display: flex; align-items: center; justify-content: center; width: 40px; height: 33px; border-top: 3px solid #fb5058; background: #1b202c; }
.debugbar svg { width: 21px; height: 22px; }

.content { flex: 1; padding: 0 20px 0 19px; }
h1 { padding-top: 38px; color: #50565b; font-size: 36px; font-weight: 500; line-height: 44px; margin-bottom: 7px; }
.card { padding: 19px; border: 1px solid #e3e6ea; border-radius: 4px; background: #fff; }
table { width: 100%; border-collapse: separate; border-spacing: 0; table-layout: fixed; }
.c-id { width: 67px; }
.c-date { width: 266px; }
.c-actions { width: 193px; }
th { height: 39px; padding: 2px 8px 0; border-bottom: 2px solid #dcdee0; font-weight: 600; text-align: left; }
td { height: 51px; padding: 0 8px; }
tbody tr:first-child td { border-bottom: 1px solid #dcdee0; background: #f9f9f9; }
tbody tr:last-child td { height: 50px; }
.file { display: flex; align-items: center; gap: 4px; }
.file svg { width: 13px; height: 16px; }
.download { display: flex; align-items: center; justify-content: center; width: 41px; height: 32px; border-radius: 3px; background: #4052b5; color: #fff; }
.download svg { width: 12px; height: 12px; margin-bottom: 2px; }
.table-footer { display: flex; align-items: flex-start; justify-content: space-between; padding: 20px 0 5px; line-height: 20px; }
.pager { display: flex; margin: 20px 0; }
.pager button { height: 34px; padding: 0 12px; border: 1px solid #dfe2e6; background: #fff; color: #6c757d; }
.pager button + button { margin-left: -1px; }
.pager button:first-child { border-radius: 3px 0 0 3px; }
.pager button:last-child { border-radius: 0 3px 3px 0; }
.pager .page { padding: 0 13px; color: #2a3fe8; }
.site-footer { display: flex; gap: 11px; padding: 38px 10px 0; line-height: 20px; }

.edge-bar { display: flex; flex-direction: column; align-items: center; width: 55px; border-left: 1px solid #3f7397; background: #0c4c7c; }
.edge-bar button { display: flex; align-items: center; justify-content: center; width: 40px; height: 40px; }
.edge-bar svg { width: 18px; height: 18px; }
.edge-bar .add { margin-top: 4px; }
.edge-bottom { margin-top: auto; padding-bottom: 2px; }
.edge-bottom::before { content: ""; display: block; width: 28px; height: 1px; margin: 0 6px 3px; background: #477a9e; }
.edge-bottom svg { width: 20px; height: 20px; }

.taskbar {
  display: grid;
  grid-template-columns: 1fr auto 1fr;
  align-items: center;
  height: 48px;
  padding: 0 0 2px 12px;
  border-top: 1px solid #464457;
  background: linear-gradient(90deg, #1e195f 0, #201e42 8%, #211f35 30%, #1f1a4c 52%, #201b4c 58%, #241e32 68%, #22202f 82%, #2b1c2e 90%, #2c1a2f 100%);
}
.weather { display: flex; align-items: center; gap: 7px; width: 144px; height: 40px; padding-left: 7px; border-radius: 4px; background: #ffffff0a; text-align: left; }
.weather svg { width: 24px; height: 24px; }
.weather-text { display: flex; flex-direction: column; color: #d0d0dc; line-height: 16px; }
.degrees { color: #fff; }
.dock { display: flex; align-items: center; margin-right: 12px; }
.app { position: relative; display: flex; align-items: center; justify-content: center; width: 40px; height: 40px; margin: 0 2px; border-radius: 4px; }
.app svg { width: 24px; height: 24px; }
.app.active { background: #ffffff12; box-shadow: 0 0 0 1px #ffffff0c, 4px 0 0 #ffffff0c; }
.app.active::after, .app.running::after { content: ""; position: absolute; bottom: 1px; left: 17px; width: 6px; height: 3px; border-radius: 2px; background: #9894a4; }
.app.active::after { left: 12px; width: 16px; background: #ccb4e8; }
.badge { position: absolute; top: 3px; right: 3px; width: 16px; height: 16px; border-radius: 50%; background: #c9b2e6; color: #222; font-size: 11px; line-height: 16px; }
.search-box { display: flex; align-items: center; gap: 8px; width: 220px; height: 32px; margin: 0 2px 0 3px; padding-left: 10px; border: 1px solid #56556a; border-radius: 16px; background: #413f56; }
.search-box svg { width: 18px; height: 18px; }
.search-box input { width: 150px; padding: 0; font-size: 13px; }
.search-box input::placeholder { color: #c6c5d0; opacity: 1; }
.tray { display: flex; align-items: center; justify-content: flex-end; padding-right: 20px; }
.overflow, .mic { width: 32px; display: flex; justify-content: center; }
.mic { color: #c9b2e6; }
.lang { width: 44px; }
.status { display: flex; align-items: center; gap: 8px; padding: 0 8px; }
.status svg { width: 16px; height: 16px; }
.clock { display: flex; flex-direction: column; width: 57px; line-height: 16px; text-align: right; }
.count { width: 16px; height: 16px; margin-left: 11px; border-radius: 50%; background: #c9b2e6; color: #222; font-size: 10px; line-height: 16px; text-align: center; }
</style>
